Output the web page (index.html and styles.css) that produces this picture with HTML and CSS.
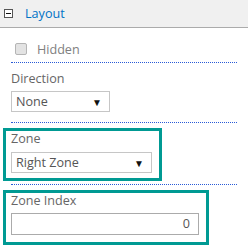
FILE: index.html
```html
<!DOCTYPE html>
<html lang="en">

<head>
    <meta charset="UTF-8">
    <title>Layout</title>
    <link rel="stylesheet" href="styles.css">
</head>

<body>
    <div class="panel">
        <div class="panel-header">
            <span class="toggle"></span>
            <span class="panel-title">Layout</span>
        </div>
        <div class="panel-body">
            <div class="field field-check">
                <label class="check-row">
                    <span class="checkbox"></span>
                    <span class="check-label">Hidden</span>
                </label>
            </div>
            <div class="field field-direction">
                <div class="field-label">Direction</div>
                <div class="select select-small">
                    <span>None</span>
                    <span class="arrow">&#9660;</span>
                </div>
            </div>
            <div class="field field-zone">
                <div class="highlight highlight-zone">
                    <div class="field-label">Zone</div>
                    <div class="select select-wide">
                        <span>Right Zone</span>
                        <span class="arrow">&#9660;</span>
                    </div>
                </div>
            </div>
            <div class="field field-index">
                <div class="highlight highlight-index">
                    <div class="field-label">Zone Index</div>
                    <div class="text-input">0</div>
                </div>
            </div>
        </div>
    </div>
</body>

</html>
```

FILE: styles.css
```css
body {
    margin: 0;
    background-color: #ffffff;
    font-family: "Open Sans", "Noto Sans", sans-serif;
    font-size: 12.6px;
    color: #444444;
}

.panel {
    width: 248px;
}

/* header strip */
.panel-header {
    height: 27px;
    background-color: #f0f0f0;
    border-bottom: 1px solid #ababab;
    display: flex;
    align-items: center;
    padding-left: 4px;
}

.toggle {
    width: 7px;
    height: 7px;
    border: 1px solid #555555;
    background-color: #ffffff;
    display: flex;
    align-items: center;
    justify-content: center;
}

.toggle::after {
    content: "";
    width: 5px;
    height: 1px;
    background-color: #111111;
}

.panel-title {
    color: #0072c6;
    margin-left: 12px;
    line-height: 16px;
}

.panel-body {
    padding: 0 11px;
    width: 226px;
}

/* each property row */
.field {
    border-bottom: 1px dotted #2a5bd7;
}

.field-check {
    padding: 12px 0 4px 4px;
}

.check-row {
    display: flex;
    align-items: center;
    height: 18px;
}

.checkbox {
    width: 10px;
    height: 10px;
    border: 1px solid #b5b5b5;
    border-radius: 2px;
    background-color: #e3e3e3;
}

.check-label {
    color: #808080;
    margin-left: 10px;
}

.field-label {
    line-height: 16px;
    color: #666666;
}

.field-direction {
    padding: 8px 0 10px 0;
}

.field-zone {
    padding: 5px 0 3px 0;
}

.field-index {
    padding: 5px 0 0 0;
    border-bottom: none;
}

/* teal highlight boxes */
.highlight {
    border: 3px solid #009a93;
    margin-left: -8px;
    padding-left: 5px;
}

.highlight-zone {
    width: 148px;
    padding-bottom: 5px;
}

.highlight-index {
    width: 195px;
    padding-bottom: 7px;
}

.select {
    margin-top: 4px;
    height: 19px;
    border: 1px solid #c6c6c6;
    display: flex;
    align-items: center;
    justify-content: space-between;
    padding: 0 7px 0 4px;
    color: #555555;
}

.select-small {
    width: 86px;
}

.select-wide {
    margin-top: 5px;
    width: 128px;
}

.arrow {
    font-size: 10px;
    color: #111111;
}

.text-input {
    margin-top: 4px;
    height: 20px;
    width: 178px;
    border: 1px solid #ababab;
    text-align: right;
    padding-right: 8px;
    line-height: 20px;
    color: #555555;
}
```
